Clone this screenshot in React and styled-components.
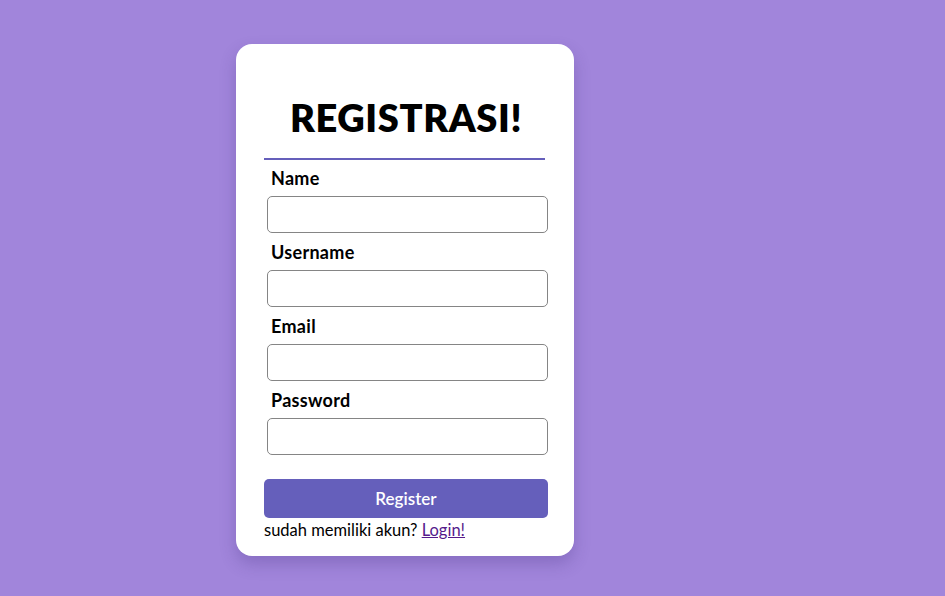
import React from "react";
import styled, { createGlobalStyle } from "styled-components";

const GlobalStyle = createGlobalStyle`
  html, body {
    margin: 0;
    padding: 0;
    background: #a185db;
    font-family: "Lato", "Open Sans", sans-serif;
  }
`;

const fields = ["Name", "Username", "Email", "Password"];

const App = () => {
  return (
    <Page>
      <GlobalStyle />
      <Card>
        <Title>REGISTRASI!</Title>
        <Divider />
        <Form onSubmit={(e) => e.preventDefault()}>
          {fields.map((f) => (
            <Field key={f}>
              <Label>{f}</Label>
              <Input type={f === "Password" ? "password" : "text"} />
            </Field>
          ))}
          <Button type="submit">Register</Button>
        </Form>
        <Footer>
          sudah memiliki akun? <LoginLink href="#">Login!</LoginLink>
        </Footer>
      </Card>
    </Page>
  );
};

export default App;

const Page = styled.div`
  min-height: 596px;
  box-sizing: border-box;
  padding: 44px 0 0 236px;
  display: flex;
  align-items: flex-start;
`;

const Card = styled.div`
  width: 338px;
  height: 512px;
  box-sizing: border-box;
  background: white;
  border-radius: 16px;
  padding: 51px 26px 0 28px;
  box-shadow: 0 8px 16px rgba(60, 40, 120, 0.25);
`;

const Title = styled.h1`
  margin: 0;
  text-align: center;
  font-size: 38px;
  font-weight: 800;
  color: #000;
  line-height: 44px;
  letter-spacing: 0.6px;
`;

const Divider = styled.div`
  height: 2px;
  background: #655fbb;
  margin: 19px 3px 0 0;
`;

const Form = styled.form`
  display: flex;
  flex-direction: column;
`;

const Field = styled.div`
  display: flex;
  flex-direction: column;
  margin-top: 8px;
  &:first-child {
    margin-top: 7px;
  }
`;

const Label = styled.label`
  font-size: 18px;
  font-weight: 700;
  color: #000;
  margin-left: 7px;
  line-height: 22px;
  letter-spacing: 0.3px;
`;

const Input = styled.input`
  box-sizing: border-box;
  width: 281px;
  height: 37px;
  margin: 7px 0 0 3px;
  border: 1px solid #858585;
  border-radius: 5px;
  outline: none;
  font-size: 16px;
  padding: 0 8px;
`;

const Button = styled.button`
  margin-top: 24px;
  width: 284px;
  height: 39px;
  border: none;
  border-radius: 5px;
  background: #655fbb;
  color: white;
  font-family: "Lato", sans-serif;
  font-size: 17px;
  font-weight: 600;
  cursor: pointer;
`;

const Footer = styled.div`
  margin-top: 2px;
  font-size: 16.5px;
  color: #000;
  line-height: 20px;
`;

const LoginLink = styled.a`
  color: #551a8b;
  text-decoration: underline;
`;
